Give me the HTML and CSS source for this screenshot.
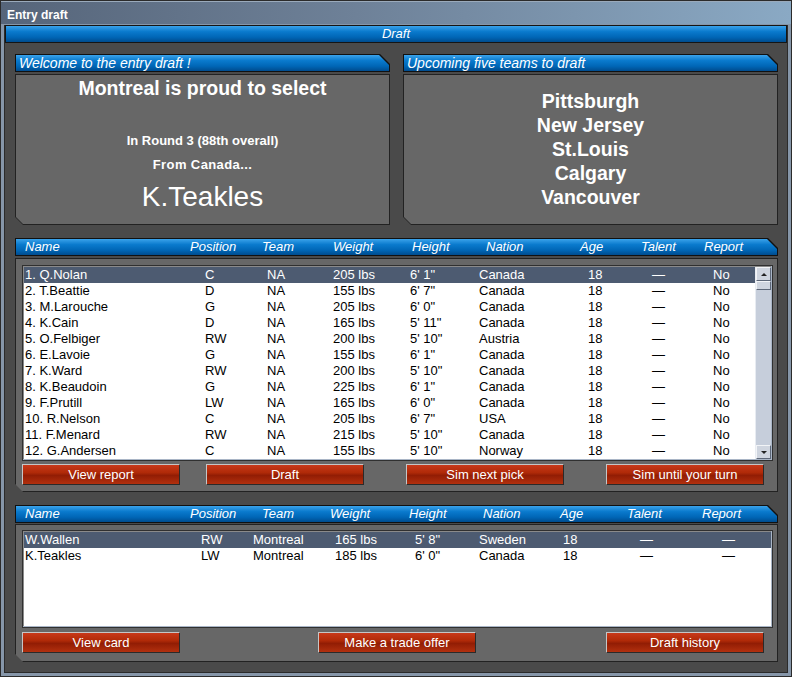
FILE: index.html
```html
<!DOCTYPE html>
<html>
<head>
  <title>Entry draft</title>
  <link rel="stylesheet" href="styles.css">
</head>
<body>
  <div class="window">
    <div class="titlebar">Entry draft</div>
    <div class="frame">
      <div class="section-bar">Draft</div>

      <div class="main">
        <div class="top-row">
          <div class="panel">
            <div class="tab"><div class="tab-inner">Welcome to the entry draft !</div></div>
            <div class="panel-body"><div class="panel-inner pick">
              <div class="pick-title">Montreal is proud to select</div>
              <div class="pick-round">In Round 3 (88th overall)</div>
              <div class="pick-from">From Canada...</div>
              <div class="pick-name">K.Teakles</div>
            </div></div>
          </div>
          <div class="panel">
            <div class="tab"><div class="tab-inner">Upcoming five teams to draft</div></div>
            <div class="panel-body"><div class="panel-inner upcoming">
              <div>Pittsburgh</div>
              <div>New Jersey</div>
              <div>St.Louis</div>
              <div>Calgary</div>
              <div>Vancouver</div>
            </div></div>
          </div>
        </div>

        <!-- prospects still on the board -->
        <div class="panel prospects">
          <div class="tab"><div class="tab-inner cols">
            <span>Name</span><span>Position</span><span>Team</span><span>Weight</span><span>Height</span><span>Nation</span><span>Age</span><span>Talent</span><span>Report</span>
          </div></div>
          <div class="list-body">
            <div class="listbox">
              <div class="rows">
                <div class="row selected"><span>1. Q.Nolan</span><span>C</span><span>NA</span><span>205 lbs</span><span>6' 1"</span><span>Canada</span><span>18</span><span>—</span><span>No</span></div>
                <div class="row"><span>2. T.Beattie</span><span>D</span><span>NA</span><span>155 lbs</span><span>6' 7"</span><span>Canada</span><span>18</span><span>—</span><span>No</span></div>
                <div class="row"><span>3. M.Larouche</span><span>G</span><span>NA</span><span>205 lbs</span><span>6' 0"</span><span>Canada</span><span>18</span><span>—</span><span>No</span></div>
                <div class="row"><span>4. K.Cain</span><span>D</span><span>NA</span><span>165 lbs</span><span>5' 11"</span><span>Canada</span><span>18</span><span>—</span><span>No</span></div>
                <div class="row"><span>5. O.Felbiger</span><span>RW</span><span>NA</span><span>200 lbs</span><span>5' 10"</span><span>Austria</span><span>18</span><span>—</span><span>No</span></div>
                <div class="row"><span>6. E.Lavoie</span><span>G</span><span>NA</span><span>155 lbs</span><span>6' 1"</span><span>Canada</span><span>18</span><span>—</span><span>No</span></div>
                <div class="row"><span>7. K.Ward</span><span>RW</span><span>NA</span><span>200 lbs</span><span>5' 10"</span><span>Canada</span><span>18</span><span>—</span><span>No</span></div>
                <div class="row"><span>8. K.Beaudoin</span><span>G</span><span>NA</span><span>225 lbs</span><span>6' 1"</span><span>Canada</span><span>18</span><span>—</span><span>No</span></div>
                <div class="row"><span>9. F.Prutill</span><span>LW</span><span>NA</span><span>165 lbs</span><span>6' 0"</span><span>Canada</span><span>18</span><span>—</span><span>No</span></div>
                <div class="row"><span>10. R.Nelson</span><span>C</span><span>NA</span><span>205 lbs</span><span>6' 7"</span><span>USA</span><span>18</span><span>—</span><span>No</span></div>
                <div class="row"><span>11. F.Menard</span><span>RW</span><span>NA</span><span>215 lbs</span><span>5' 10"</span><span>Canada</span><span>18</span><span>—</span><span>No</span></div>
                <div class="row"><span>12. G.Andersen</span><span>C</span><span>NA</span><span>155 lbs</span><span>5' 10"</span><span>Norway</span><span>18</span><span>—</span><span>No</span></div>
              </div>
              <div class="scrollbar">
                <div class="sb-btn"><span class="arrow-up"></span></div>
                <div class="sb-thumb"></div>
                <div class="sb-track"></div>
                <div class="sb-btn"><span class="arrow-down"></span></div>
              </div>
            </div>
            <div class="buttons">
              <button class="btn">View report</button>
              <button class="btn">Draft</button>
              <button class="btn">Sim next pick</button>
              <button class="btn">Sim until your turn</button>
            </div>
          </div>
        </div>

        <!-- picks made by the club -->
        <div class="panel picks">
          <div class="tab"><div class="tab-inner cols">
            <span>Name</span><span>Position</span><span>Team</span><span>Weight</span><span>Height</span><span>Nation</span><span>Age</span><span>Talent</span><span>Report</span>
          </div></div>
          <div class="list-body">
            <div class="listbox">
              <div class="rows">
                <div class="row selected"><span>W.Wallen</span><span>RW</span><span>Montreal</span><span>165 lbs</span><span>5' 8"</span><span>Sweden</span><span>18</span><span>—</span><span>—</span></div>
                <div class="row"><span>K.Teakles</span><span>LW</span><span>Montreal</span><span>185 lbs</span><span>6' 0"</span><span>Canada</span><span>18</span><span>—</span><span>—</span></div>
              </div>
            </div>
            <div class="buttons">
              <button class="btn">View card</button>
              <button class="btn">Make a trade offer</button>
              <button class="btn">Draft history</button>
            </div>
          </div>
        </div>
      </div>
    </div>
  </div>
</body>
</html>
```

FILE: styles.css
```css
body {
  margin: 0;
  padding: 0;
  background: #2b2b2b;
  font-family: "Liberation Sans", Arial, sans-serif;
}

.window {
  width: 790px;
  height: 675px;
  border: 1px solid #2b2b2b;
  background: #4a4a4a;
  display: flex;
  flex-direction: column;
}

.titlebar {
  flex-shrink: 0;
  height: 23px;
  box-sizing: border-box;
  padding: 6px 0 0 6px;
  border-top: 1px solid #9aaabb;
  background: linear-gradient(90deg, #56657a 0%, #6e8198 45%, #8aa9c4 100%);
  color: #fff;
  font-size: 12px;
  line-height: 14px;
  font-weight: bold;
}

.frame {
  flex: 1;
  min-height: 0;
  border: 3px solid #8696a9;
  border-top: 1px solid #8696a9;
  box-shadow: inset 0 0 0 1px #2b2b2b;
  padding: 0 1px 11px 1px;
  display: flex;
  flex-direction: column;
}

.section-bar {
  flex-shrink: 0;
  height: 18px;
  box-sizing: border-box;
  border: 1px solid #151515;
  background: linear-gradient(#3aa2ea 0%, #0a7acd 35%, #0066b6 70%, #004c8e 100%);
  color: #fff;
  font-style: italic;
  font-size: 13px;
  line-height: 16px;
  text-align: center;
}

.main {
  padding: 11px 9px 0 10px;
  display: flex;
  flex-direction: column;
  gap: 13px;
}

.top-row {
  flex-shrink: 0;
  display: grid;
  grid-template-columns: 375px 375px;
  gap: 13px;
  height: 171px;
}

.panel {
  flex-shrink: 0;
  display: flex;
  flex-direction: column;
}

/* blue tab with the clipped top right corner */
.tab {
  flex-shrink: 0;
  height: 18px;
  padding: 1px;
  box-sizing: border-box;
  background: #111;
  clip-path: polygon(0 0, calc(100% - 10px) 0, 100% 10px, 100% 100%, 0 100%);
}

.tab-inner {
  height: 100%;
  background: linear-gradient(#3aa2ea 0%, #0a7acd 35%, #0066b6 70%, #004c8e 100%);
  clip-path: polygon(0 0, calc(100% - 10px) 0, 100% 10px, 100% 100%, 0 100%);
  color: #fff;
  font-style: italic;
  font-size: 14px;
  line-height: 16px;
  padding-left: 3px;
  white-space: nowrap;
}

.panel-body {
  margin-top: 2px;
  flex: 1;
  padding: 1px;
  background: #222;
  clip-path: polygon(0 0, 100% 0, 100% 100%, 8px 100%, 0 calc(100% - 8px));
}

.panel-inner {
  height: 100%;
  background: #676767;
  color: #fff;
  clip-path: polygon(0 0, 100% 0, 100% 100%, 7px 100%, 0 calc(100% - 7px));
}

.pick {
  display: flex;
  flex-direction: column;
  align-items: center;
  padding-top: 3px;
  box-sizing: border-box;
}

.pick-title {
  font-size: 19.5px;
  font-weight: bold;
  line-height: 20px;
}

.pick-round {
  margin-top: 35px;
  font-size: 13px;
  font-weight: bold;
  line-height: 16px;
}

.pick-from {
  margin-top: 8px;
  font-size: 13px;
  font-weight: bold;
  letter-spacing: 0.4px;
  line-height: 16px;
}

.pick-name {
  margin-top: 9px;
  font-size: 28px;
  line-height: 30px;
}

.upcoming {
  display: flex;
  flex-direction: column;
  align-items: center;
  justify-content: center;
  font-size: 19.5px;
  font-weight: bold;
  line-height: 24px;
  padding-bottom: 1px;
  box-sizing: border-box;
}

/* column layouts for the two lists */
.cols,
.row {
  display: grid;
}

.tab-inner.cols {
  padding-left: 9px;
  font-size: 13px;
}

.prospects .cols {
  grid-template-columns: 165px 72px 71px 79px 74px 94px 61px 63px 1fr;
}

.prospects .row {
  grid-template-columns: 180px 62px 66px 77px 69px 109px 64px 61px 1fr;
}

.picks .cols {
  grid-template-columns: 165px 72px 68px 79px 74px 77px 67px 75px 1fr;
}

.picks .row {
  grid-template-columns: 176px 52px 82px 80px 64px 84px 77px 82px 1fr;
}

.list-body {
  margin-top: 2px;
  height: 234px;
  box-sizing: border-box;
  border: 1px solid #222;
  background: #676767;
  padding: 6px 4px 0 6px;
  clip-path: polygon(0 0, 100% 0, 100% 100%, 8px 100%, 0 calc(100% - 8px));
}

.picks .list-body {
  margin-top: 1px;
  height: 138px;
  padding-top: 5px;
}

.listbox {
  display: flex;
  background: #fff;
  border: 1px solid #303030;
  box-shadow: inset -1px -1px 0 #a9b5c6, inset 1px 1px 0 #8a8a8a;
  padding: 1px;
  height: 192px;
}

.picks .listbox {
  height: 94px;
}

.rows {
  flex: 1;
}

.row {
  height: 16px;
  line-height: 16px;
  font-size: 13px;
  color: #000;
  padding-left: 1px;
  white-space: nowrap;
}

.row.selected {
  background: #4d5b71;
  color: #fff;
}

.scrollbar {
  width: 15px;
  display: flex;
  flex-direction: column;
  background: #c6cedb;
  border-left: 1px solid #e8ecf2;
}

.sb-btn,
.sb-thumb {
  height: 14px;
  box-sizing: border-box;
  background: #cfd5df;
  border: 1px solid #5d6778;
  border-top-color: #f2f4f7;
  border-left-color: #f2f4f7;
  display: flex;
  align-items: center;
  justify-content: center;
}

.sb-thumb {
  height: 9px;
}

.sb-track {
  flex: 1;
}

.arrow-up,
.arrow-down {
  width: 0;
  height: 0;
  border-left: 3px solid transparent;
  border-right: 3px solid transparent;
}

.arrow-up {
  border-bottom: 3px solid #222;
}

.arrow-down {
  border-top: 3px solid #222;
}

.buttons {
  display: grid;
  grid-template-columns: 184px 200px 200px 158px;
  margin-top: 3px;
}

.picks .buttons {
  grid-template-columns: 296px 288px 158px;
  margin-top: 4px;
}

.btn {
  width: 158px;
  height: 21px;
  padding: 0;
  border: 1px solid #2a2a2a;
  border-top-color: #c6c6c6;
  border-left-color: #c6c6c6;
  background: linear-gradient(#c8391a 0%, #b02a08 40%, #921d04 55%, #b2300e 100%);
  color: #fff;
  font-family: "Liberation Sans", Arial, sans-serif;
  font-size: 13px;
  cursor: pointer;
}
```
